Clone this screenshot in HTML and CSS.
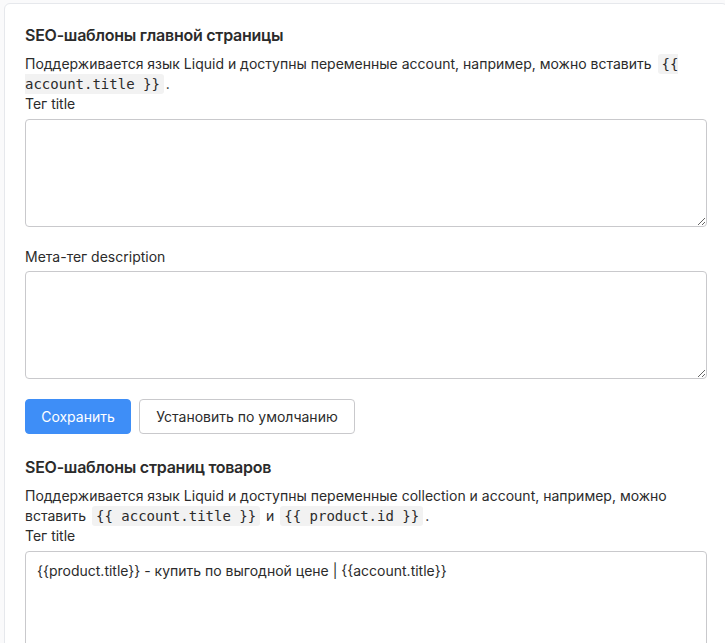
FILE: index.html
```html
<!DOCTYPE html>
<html lang="ru">
<head>
<meta charset="utf-8">
<title>SEO-шаблоны</title>
<link rel="stylesheet" href="styles.css">
</head>
<body>
<div class="page">
  <div class="card">
    <section class="section">
      <h2 class="title">SEO-шаблоны главной страницы</h2>
      <p class="hint">Поддерживается язык Liquid и доступны переменные account, например, можно вставить <code class="code">{{ account.title }}</code>.</p>
      <label class="label">Тег title</label>
      <textarea class="field"></textarea>
      <label class="label label-gap">Мета-тег description</label>
      <textarea class="field"></textarea>
      <div class="actions">
        <button class="btn btn-primary">Сохранить</button>
        <button class="btn btn-default">Установить по умолчанию</button>
      </div>
    </section>
    <section class="section">
      <h2 class="title">SEO-шаблоны страниц товаров</h2>
      <p class="hint">Поддерживается язык Liquid и доступны переменные collection и account, например, можно вставить <code class="code">{{ account.title }}</code> и <code class="code">{{ product.id }}</code>.</p>
      <label class="label">Тег title</label>
      <textarea class="field">{{product.title}} - купить по выгодной цене | {{account.title}}</textarea>
    </section>
  </div>
</div>
</body>
</html>
```

FILE: styles.css
```css
html, body {
  margin: 0;
  padding: 0;
  overflow: hidden;
  background: #fafafb;
}
body {
  font-family: Inter, "Noto Sans", sans-serif;
  font-size: 14px;
  line-height: 20px;
  color: #2b2b2b;
}
.page {
  padding: 3px 0 0 4px;
}
.card {
  width: 724px;
  box-sizing: border-box;
  background: #fff;
  border: 1px solid #e6e8ec;
  border-radius: 6px;
  padding: 19px 20px 20px 20px;
}
.section {
  display: flex;
  flex-direction: column;
}
.section + .section {
  margin-top: 21px;
}
.title {
  margin: 0 0 7px 0;
  font-size: 16px;
  line-height: 24px;
  font-weight: 600;
  letter-spacing: -0.25px;
  color: #2b2b2b;
}
.hint {
  margin: 0;
}
.code {
  font-family: "DejaVu Sans Mono", monospace;
  font-size: 14px;
  line-height: 18px;
  background: #f2f2f2;
  border-radius: 3px;
  padding: 2px 4px;
  margin: 0 2px;
}
.label {
  display: block;
  margin-bottom: 5px;
}
.label-gap {
  margin-top: 20px;
  margin-bottom: 4px;
}
.field {
  display: block;
  width: 682px;
  height: 108px;
  box-sizing: border-box;
  border: 1px solid #c9c9cc;
  border-radius: 4px;
  padding: 9px 11px;
  font-family: Inter, "Noto Sans", sans-serif;
  font-size: 14px;
  line-height: 20px;
  color: #2b2b2b;
  background: #fff;
  resize: vertical;
}
.actions {
  display: flex;
  gap: 8px;
  margin-top: 20px;
}
.btn {
  height: 35px;
  box-sizing: border-box;
  border-radius: 4px;
  font-family: Inter, "Noto Sans", sans-serif;
  font-size: 14px;
  padding: 0;
  white-space: nowrap;
  cursor: pointer;
}
.btn-primary {
  background: #3e8ef7;
  border: 1px solid #3e8ef7;
  color: #fff;
  width: 106px;
}
.btn-default {
  background: #fff;
  border: 1px solid #c9c9cc;
  color: #2b2b2b;
  width: 216px;
}
```
